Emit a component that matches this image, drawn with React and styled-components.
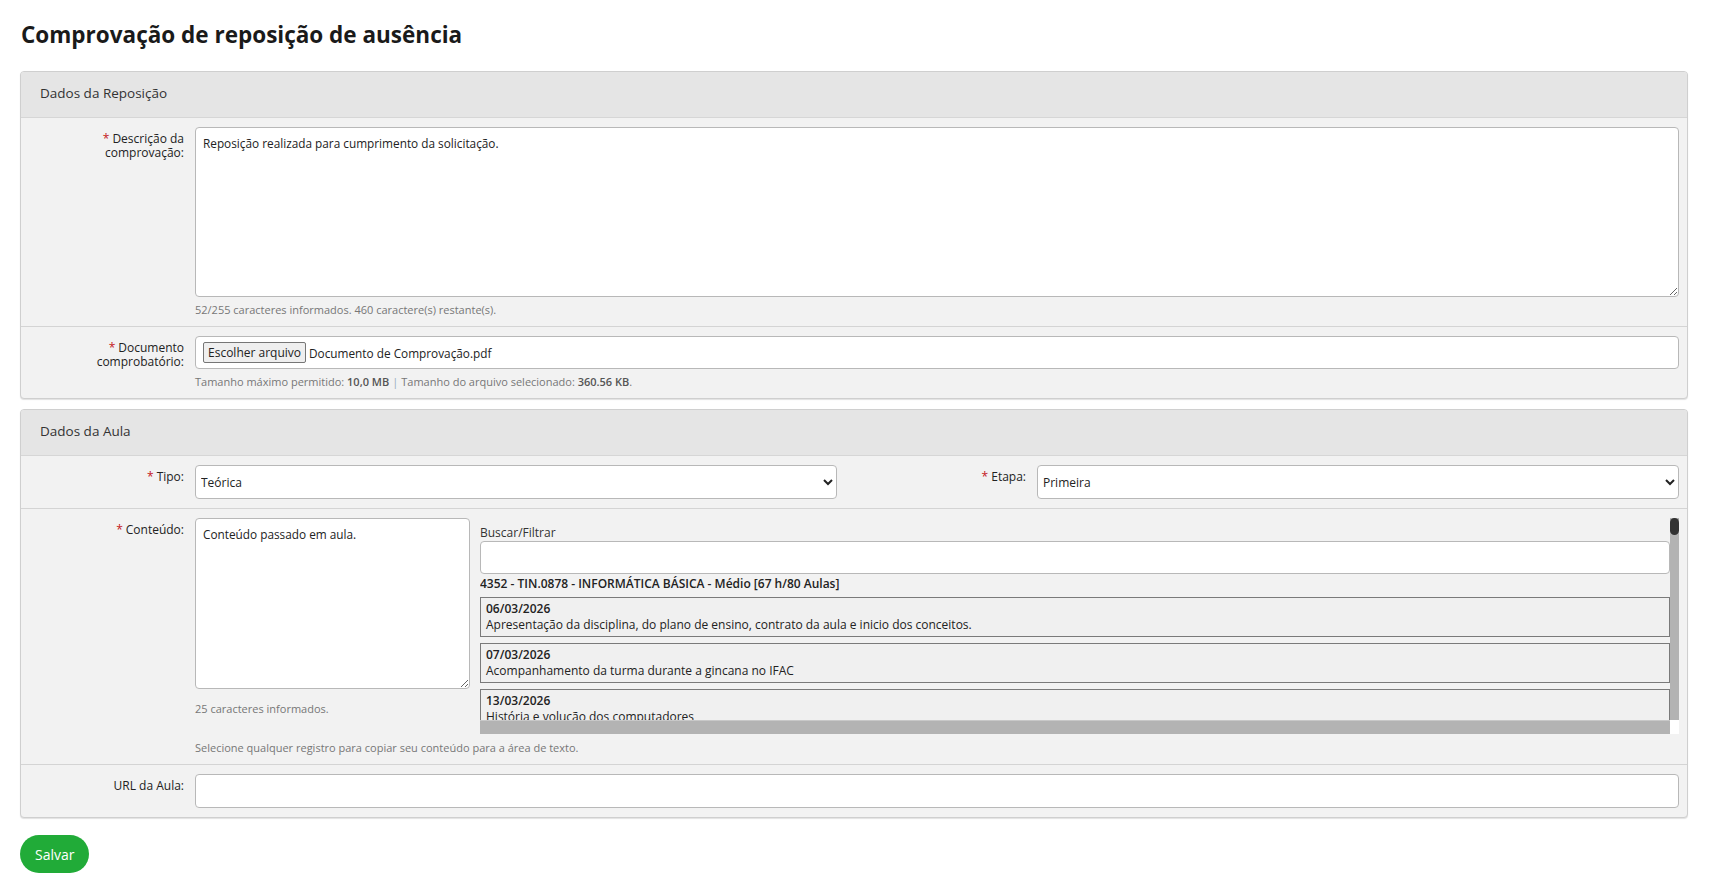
import React from 'react';
import styled, { createGlobalStyle } from 'styled-components';

const GlobalStyle = createGlobalStyle`
  body {
    margin: 0;
    background: #fff;
    font-family: "Open Sans", "Liberation Sans", sans-serif;
    color: #333;
  }
`

const Page = styled.div`
  padding: 20px 27px 20px 20px;
`

const Title = styled.h1`
  margin: 0 0 21px 1px;
  font-size: 22.5px;
  line-height: 30px;
  font-weight: 700;
  color: #1a1a1a;
`

const Panel = styled.section`
  background: #f2f2f2;
  border: 1px solid #cfcfcf;
  border-radius: 4px;
  box-shadow: 0 1px 1px rgba(0, 0, 0, 0.12);
  overflow: hidden;
  & + & {
    margin-top: 10px;
  }
`

const PanelHeader = styled.h2`
  margin: 0;
  height: 45px;
  line-height: 43px;
  padding: 0 19px;
  background: #e5e5e5;
  border-bottom: 1px solid #d6d6d6;
  font-size: 13.5px;
  font-weight: 400;
  color: #333;
`

const Row = styled.div`
  display: grid;
  grid-template-columns: ${p => p.$cols || '163px 1fr'};
  column-gap: 11px;
  padding: 9px 8px 9px 0;
  & + & {
    border-top: 1px solid #d4d4d4;
  }
`

const Label = styled.label`
  padding-top: 5px;
  text-align: right;
  font-size: 12px;
  line-height: 14px;
  color: #222;
`

const Req = styled.span`
  color: #c4161c;
  margin-right: 3px;
`

const Field = styled.div`
  min-width: 0;
`

const TextArea = styled.textarea`
  display: block;
  box-sizing: border-box;
  width: 100%;
  height: ${p => p.$h || 170}px;
  padding: 7px 7px;
  border: 1px solid #b8b8b8;
  border-radius: 4px;
  background: #fff;
  font-family: "Open Sans", "Liberation Sans", sans-serif;
  font-size: 11.8px;
  line-height: 16px;
  color: #222;
  resize: vertical;
  outline: none;
`

const Help = styled.p`
  margin: ${p => p.$mt || 5}px 0 0;
  font-size: 11px;
  line-height: 15px;
  color: #777;
  b {
    color: #555;
    font-weight: 600;
  }
`

const Sep = styled.span`
  color: #9ab;
  margin: 0 3px;
`

const FileBox = styled.div`
  display: flex;
  align-items: center;
  gap: 3px;
  box-sizing: border-box;
  height: 33px;
  padding: 0 7px;
  border: 1px solid #b8b8b8;
  border-radius: 4px;
  background: #fff;
  font-size: 11.8px;
  color: #222;
`

const FileButton = styled.button`
  height: 21px;
  padding: 0 4px;
  border: 1px solid #767676;
  border-radius: 2px;
  background: #efefef;
  font-family: "Open Sans", "Liberation Sans", sans-serif;
  font-size: 12px;
  color: #222;
`

const Select = styled.select`
  display: block;
  box-sizing: border-box;
  width: 100%;
  height: 34px;
  padding: 0 1px;
  border: 1px solid #b8b8b8;
  border-radius: 4px;
  background: #fff;
  font-family: "Open Sans", "Liberation Sans", sans-serif;
  font-size: 12px;
  color: #222;
`

const Input = styled.input`
  display: block;
  box-sizing: border-box;
  width: 100%;
  height: ${p => p.$h || 34}px;
  padding: 0 7px;
  border: 1px solid #b8b8b8;
  border-radius: 4px;
  background: #fff;
  font-family: "Open Sans", "Liberation Sans", sans-serif;
  font-size: 12px;
  outline: none;
`

const ContentGrid = styled.div`
  display: grid;
  grid-template-columns: 275px 1fr;
  column-gap: 10px;
`

/* list with its own (drawn) scrollbars: headless chrome hides native ones */
const Scroller = styled.div`
  display: grid;
  grid-template-columns: 1fr 9px;
  grid-template-rows: 202px 14px;
  height: 216px;
`

const Viewport = styled.div`
  overflow: hidden;
  min-width: 0;
`

const VTrack = styled.div`
  background: #b3b3b3;
`

const VThumb = styled.div`
  height: 17px;
  background: #333;
  border-radius: 5px;
`

const HTrack = styled.div`
  background: #b3b3b3;
  border-top: 1px solid #c8c8c8;
`

const Corner = styled.div`
  background: #fff;
`

const PickerLabel = styled.div`
  padding-top: 7px;
  font-size: 12px;
  line-height: 16px;
  color: #333;
`

const Course = styled.div`
  margin: 2px 0 5px;
  font-size: 12px;
  line-height: 16px;
  font-weight: 600;
  color: #222;
`

const Lesson = styled.div`
  padding: 3px 5px;
  border: 1px solid #7a7a7a;
  background: #f0f0f0;
  font-size: 12px;
  line-height: 16px;
  color: #222;
  cursor: pointer;
  & + & {
    margin-top: 6px;
  }
  strong {
    display: block;
    font-weight: 600;
  }
`

const SaveButton = styled.button`
  margin-top: 17px;
  height: 38px;
  padding: 0 15px;
  border: none;
  border-radius: 19px;
  background: #21ab38;
  font-family: "Open Sans", "Liberation Sans", sans-serif;
  font-size: 14px;
  color: #fff;
`

const lessons = [
  { date: '06/03/2026', text: 'Apresentação da disciplina, do plano de ensino, contrato da aula e inicio dos conceitos.' },
  { date: '07/03/2026', text: 'Acompanhamento da turma durante a gincana no IFAC' },
  { date: '13/03/2026', text: 'História e volução dos computadores' },
  { date: '14/03/2026', text: 'Componentes de hardware: processador, memória e dispositivos de armazenamento' },
]

const App = () => {
  return (
    <Page>
      <GlobalStyle />
      <Title>Comprovação de reposição de ausência</Title>

      <Panel>
        <PanelHeader>Dados da Reposição</PanelHeader>
        <Row>
          <Label><Req>*</Req>Descrição da comprovação:</Label>
          <Field>
            <TextArea defaultValue="Reposição realizada para cumprimento da solicitação." />
            <Help>52/255 caracteres informados. 460 caractere(s) restante(s).</Help>
          </Field>
        </Row>
        <Row>
          <Label><Req>*</Req>Documento comprobatório:</Label>
          <Field>
            <FileBox>
              <FileButton type="button">Escolher arquivo</FileButton>
              <span>Documento de Comprovação.pdf</span>
            </FileBox>
            <Help>
              Tamanho máximo permitido: <b>10,0 MB</b><Sep>|</Sep>Tamanho do arquivo selecionado: <b>360.56 KB</b>.
            </Help>
          </Field>
        </Row>
      </Panel>

      <Panel>
        <PanelHeader>Dados da Aula</PanelHeader>
        <Row $cols="163px 1fr 178px 1fr">
          <Label><Req>*</Req>Tipo:</Label>
          <Select defaultValue="teorica">
            <option value="teorica">Teórica</option>
            <option value="pratica">Prática</option>
          </Select>
          <Label><Req>*</Req>Etapa:</Label>
          <Select defaultValue="primeira">
            <option value="primeira">Primeira</option>
            <option value="segunda">Segunda</option>
          </Select>
        </Row>
        <Row>
          <Label><Req>*</Req>Conteúdo:</Label>
          <Field>
            <ContentGrid>
              <div>
                <TextArea $h={171} defaultValue="Conteúdo passado em aula." />
                <Help $mt={12}>25 caracteres informados.</Help>
              </div>
              <Scroller>
                <Viewport>
                  <PickerLabel>Buscar/Filtrar</PickerLabel>
                  <Input $h={33} />
                  <Course>4352 - TIN.0878 - INFORMÁTICA BÁSICA - Médio [67 h/80 Aulas]</Course>
                  {lessons.map((l, i) => (
                    <Lesson key={i}>
                      <strong>{l.date}</strong>
                      {l.text}
                    </Lesson>
                  ))}
                </Viewport>
                <VTrack><VThumb /></VTrack>
                <HTrack />
                <Corner />
              </Scroller>
            </ContentGrid>
            <Help $mt={6}>Selecione qualquer registro para copiar seu conteúdo para a área de texto.</Help>
          </Field>
        </Row>
        <Row>
          <Label>URL da Aula:</Label>
          <Input />
        </Row>
      </Panel>

      <SaveButton type="button">Salvar</SaveButton>
    </Page>
  )
}

export default App;
